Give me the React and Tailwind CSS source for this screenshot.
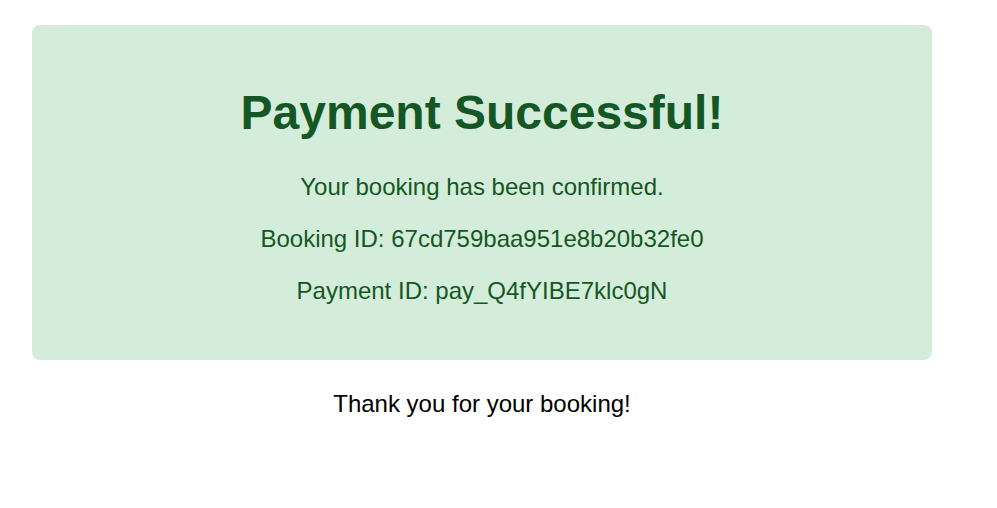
import React from 'react';

export default function App() {
  const details = [
    'Your booking has been confirmed.',
    'Booking ID: 67cd759baa951e8b20b32fe0',
    'Payment ID: pay_Q4fYIBE7klc0gN'
  ];

  return (
    <div className="min-h-[508px] bg-white pl-[32px] pt-[25px]" style={{ fontFamily: '"Liberation Sans", Arial, sans-serif' }}>
      <div className="w-[900px]">
        {/* Success card */}
        <div className="flex flex-col items-center rounded-[8px] bg-[#d4edda] pt-[60px] pb-[55px] text-[#155724]">
          <h1 className="text-[48px] font-bold leading-[56px]">Payment Successful!</h1>
          <div className="mt-[32px] flex flex-col items-center gap-[24px]">
            {details.map((line) => (
              <p key={line} className="text-[24px] leading-[28px]">{line}</p>
            ))}
          </div>
        </div>

        <p className="mt-[30px] text-center text-[24px] leading-[28px] text-black">
          Thank you for your booking!
        </p>
      </div>
    </div>
  );
}
